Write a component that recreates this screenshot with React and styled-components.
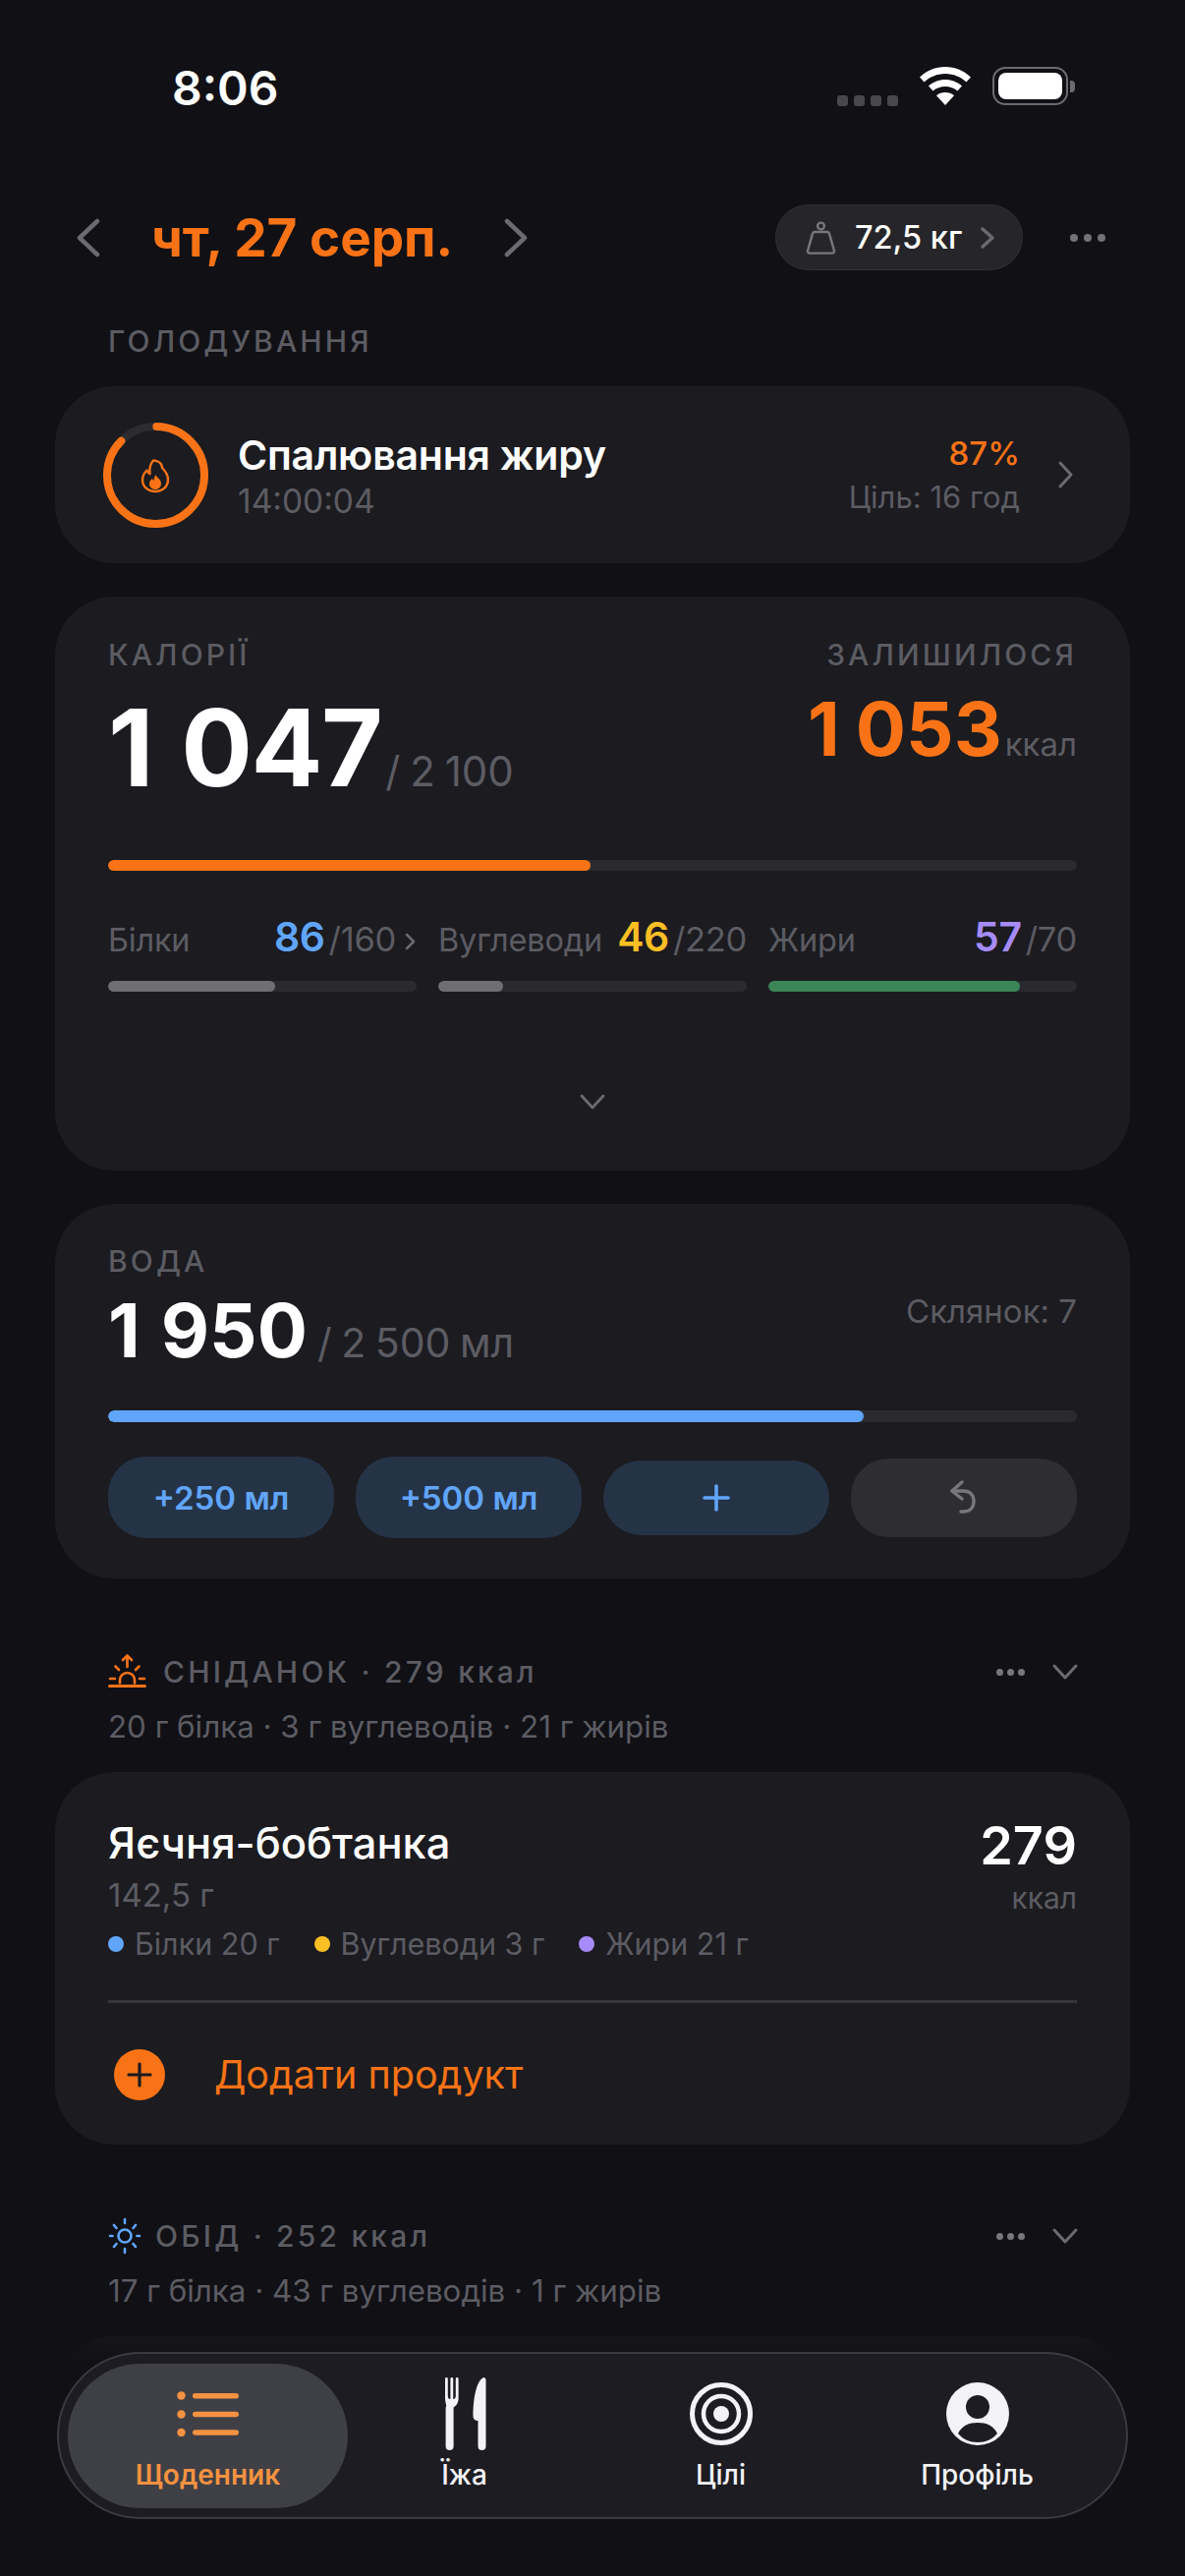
import React from "react";
import styled, { createGlobalStyle } from "styled-components";

const GlobalStyle = createGlobalStyle`
  html, body {
    margin: 0;
    height: 2621px;
    overflow: hidden;
    background: #101015;
    font-family: Inter, "Liberation Sans", sans-serif;
    -webkit-font-smoothing: antialiased;
  }
  * { box-sizing: border-box; }
`;

const ORANGE = "#f97316";
const BLUE = "#60a5fa";
const YELLOW = "#fbbf24";
const PURPLE = "#a78bfa";
const MUTED = "#5c5c62";

const Page = styled.div`
  width: 1206px;
  height: 2621px;
  padding: 0 56px;
  overflow: hidden;
  position: relative;
`;

/* status bar */
const StatusBar = styled.div`
  height: 208px;
  padding: 68px 119px 0 175px;
  margin: 0 -56px;
  display: flex;
  justify-content: space-between;
  align-items: flex-start;
`;
const Time = styled.span`
  font-size: 48px;
  line-height: 44px;
  font-weight: 600;
  color: #fff;
`;
const StatusIcons = styled.div`
  display: flex;
  align-items: flex-start;
`;
const SignalDots = styled.div`
  display: flex;
  gap: 6px;
  margin: 29px 21px 0 0;
`;
const SignalDot = styled.i`
  width: 11px;
  height: 11px;
  border-radius: 3px;
  background: #48484c;
`;
const BatteryBody = styled.div`
  width: 77px;
  height: 39px;
  margin-left: 21px;
  padding: 4px;
  border: 2px solid #6c6c70;
  border-radius: 13px;
  position: relative;
  &::after {
    content: "";
    position: absolute;
    right: -9px;
    top: 12px;
    width: 5px;
    height: 12px;
    border-radius: 0 4px 4px 0;
    background: #6c6c70;
  }
`;
const BatteryFill = styled.div`
  height: 100%;
  border-radius: 8px;
  background: #fff;
`;

/* date row */
const DateRow = styled.div`
  height: 67px;
  display: flex;
  align-items: center;
`;
const BackSpacer = styled.span`
  width: ${(p) => p.$width}px;
  flex: none;
`;
const DateText = styled.span`
  margin: 0 52px;
  font-size: 53px;
  font-weight: 700;
  color: ${ORANGE};
  white-space: nowrap;
`;
const WeightPill = styled.div`
  height: 67px;
  width: 252px;
  margin-left: auto;
  padding: 0 30px;
  display: flex;
  align-items: center;
  border-radius: 34px;
  background: #25252a;
  border: 1px solid #2f2f34;
  font-size: 32.5px;
  font-weight: 500;
  color: #fff;
  white-space: nowrap;
`;
const WeightText = styled.span`
  margin: 0 18px;
`;
const MoreDots = styled.div`
  display: flex;
  gap: ${(p) => p.$gap || 7}px;
  margin-left: ${(p) => p.$left || 0}px;
`;
const MoreDot = styled.i`
  width: ${(p) => p.$size || 8}px;
  height: ${(p) => p.$size || 8}px;
  border-radius: 50%;
  background: ${(p) => p.$color || "#727277"};
`;

/* shared */
const SectionLabel = styled.div`
  font-size: 30px;
  line-height: 36px;
  font-weight: 500;
  letter-spacing: 3.1px;
  color: ${MUTED};
  white-space: nowrap;
`;
const FastingLabel = styled(SectionLabel)`
  margin: 54px 0 28px 54px;
`;
const Card = styled.section`
  height: ${(p) => p.$height}px;
  margin-bottom: ${(p) => p.$gap || 34}px;
  padding: ${(p) => p.$pad || "0 54px"};
  border-radius: 60px;
  background: #1b1b20;
`;

/* fasting */
const FastingCard = styled(Card)`
  display: flex;
  align-items: center;
  padding: 0 57px 0 49px;
`;
const Ring = styled.div`
  width: 107px;
  height: 107px;
  margin-right: 30px;
  flex: none;
`;
const FastingInfo = styled.div`
  flex: 1;
`;
const FastingTitle = styled.div`
  font-size: 41px;
  line-height: 50px;
  font-weight: 600;
  letter-spacing: -0.2px;
  color: #fff;
`;
const FastingTime = styled.div`
  margin-top: 3px;
  font-size: 33.5px;
  line-height: 38px;
  color: ${MUTED};
`;
const FastingGoal = styled.div`
  text-align: right;
  margin-right: 38px;
`;
const FastingPct = styled.div`
  font-size: 33px;
  line-height: 38px;
  font-weight: 500;
  color: ${ORANGE};
`;
const FastingTarget = styled.div`
  margin-top: 8px;
  font-size: 31px;
  line-height: 36px;
  color: ${MUTED};
`;

/* calories */
const SplitRow = styled.div`
  height: ${(p) => p.$height || "auto"};
  display: flex;
  justify-content: space-between;
  align-items: flex-start;
`;
const BigLine = styled.div`
  display: flex;
  align-items: baseline;
  margin-top: ${(p) => p.$top || 0}px;
  white-space: nowrap;
`;
const BigNumber = styled.span`
  font-size: ${(p) => p.$size}px;
  line-height: 1;
  font-weight: 700;
  letter-spacing: ${(p) => p.$spacing || 0}px;
  word-spacing: ${(p) => p.$words || 0}px;
  color: ${(p) => p.$color || "#fff"};
`;
const Total = styled.span`
  margin-left: ${(p) => p.$left || 6}px;
  font-size: ${(p) => p.$size || 42}px;
  line-height: 1;
  font-weight: 400;
  word-spacing: -2px;
  color: ${MUTED};
`;
const GlassCount = styled.span`
  margin-top: 13px;
  font-size: 33px;
  line-height: 40px;
  color: ${MUTED};
`;
const Track = styled.div`
  height: ${(p) => p.$height || 11}px;
  margin-top: ${(p) => p.$top || 0}px;
  border-radius: 6px;
  background: #2a2a2f;
  overflow: hidden;
`;
const Fill = styled.div`
  height: 100%;
  border-radius: 6px;
  background: ${(p) => p.$color};
`;
const MacroGrid = styled.div`
  display: grid;
  grid-template-columns: repeat(3, 1fr);
  gap: 22px;
  margin-top: 42px;
`;
const MacroHead = styled.div`
  height: 44px;
  margin-bottom: 26px;
  display: flex;
  align-items: baseline;
  white-space: nowrap;
  font-size: 32.5px;
  color: ${MUTED};
`;
const MacroName = styled.span`
  flex: 1;
  letter-spacing: -0.2px;
`;
const MacroValue = styled.span`
  font-size: 41px;
  font-weight: 600;
  letter-spacing: -0.4px;
  color: ${(p) => p.$color};
`;
const MacroGoal = styled.span`
  margin-left: 4px;
  font-size: 34.5px;
  letter-spacing: -0.3px;
`;
const MacroArrow = styled.span`
  margin-left: 8px;
`;
const CenterChevron = styled.div`
  display: flex;
  justify-content: center;
  margin-top: 103px;
`;

/* water */
const WaterButtons = styled.div`
  display: grid;
  grid-template-columns: repeat(4, 1fr);
  gap: 22px;
  align-items: center;
  margin-top: 35px;
`;
const WaterButton = styled.div`
  height: ${(p) => p.$height}px;
  display: flex;
  align-items: center;
  justify-content: center;
  border-radius: 38px;
  background: ${(p) => (p.$plain ? "#2d2d32" : "#253346")};
  color: ${BLUE};
  font-size: 33px;
  font-weight: 600;
`;

/* meals */
const MealHead = styled.div`
  display: flex;
  align-items: center;
  height: 40px;
  margin: -1px 52px 1px 54px;
`;
const MealTitle = styled(SectionLabel)`
  flex: 1;
  margin-left: ${(p) => p.$left}px;
  letter-spacing: 3.2px;
`;
const MealSub = styled.div`
  margin: 18px 0 28px 54px;
  font-size: 31.3px;
  line-height: 36px;
  color: ${MUTED};
  white-space: nowrap;
`;
const FoodName = styled.div`
  font-size: 43.5px;
  line-height: 50px;
  font-weight: 500;
  color: #fff;
`;
const FoodCal = styled.div`
  font-size: 54px;
  line-height: 56px;
  font-weight: 600;
  color: #fff;
`;
const FoodUnit = styled.div`
  margin-top: 7px;
  text-align: right;
  font-size: 30px;
  line-height: 36px;
  color: ${MUTED};
`;
const FoodWeight = styled.div`
  margin-top: 9px;
  font-size: 33px;
  line-height: 38px;
  color: ${MUTED};
`;
const FoodMacros = styled.div`
  margin-top: 11px;
  display: flex;
  gap: 35px;
  font-size: 30.5px;
  line-height: 36px;
  color: ${MUTED};
  white-space: nowrap;
`;
const FoodMacro = styled.span`
  display: flex;
  align-items: center;
  gap: 11px;
  &::before {
    content: "";
    width: 16px;
    height: 16px;
    border-radius: 50%;
    background: ${(p) => p.$color};
  }
`;
const Divider = styled.div`
  height: 3px;
  margin-top: 39px;
  background: #35353a;
`;
const AddRow = styled.div`
  display: flex;
  align-items: center;
  gap: 50px;
  margin: 47px 0 0 6px;
  font-size: 39.5px;
  font-weight: 400;
  color: ${ORANGE};
`;
const AddIcon = styled.div`
  width: 52px;
  height: 52px;
  border-radius: 50%;
  background: ${ORANGE};
  display: flex;
  align-items: center;
  justify-content: center;
`;

/* bottom */
const BottomFade = styled.div`
  position: absolute;
  left: 0;
  right: 0;
  top: 2352px;
  bottom: 0;
  background: linear-gradient(to bottom, rgba(16, 16, 21, 0) 0, rgba(16, 16, 21, 0.85) 40px, #101015 60px);
`;
const TabBar = styled.nav`
  position: absolute;
  left: 58px;
  top: 2393px;
  width: 1090px;
  height: 170px;
  padding: 10px 19px 9px 21px;
  display: grid;
  grid-template-columns: repeat(4, 261px);
  border-radius: 85px;
  background: #1c1c22;
  border: 2px solid #3a3b42;
`;
const Tab = styled.div`
  display: flex;
  flex-direction: column;
  align-items: center;
  justify-content: flex-end;
  padding-bottom: 17px;
  margin: 0 ${(p) => (p.$active ? -12 : 0)}px;
  border-radius: 74px;
  background: ${(p) => (p.$active ? "#3f4046" : "transparent")};
  color: ${(p) => (p.$active ? "#f59241" : "#f2f2f7")};
  font-size: 28px;
  line-height: 34px;
  font-weight: ${(p) => (p.$active ? 600 : 500)};
  white-space: nowrap;
`;
const TabIcon = styled.div`
  height: 76px;
  margin-bottom: 7px;
  display: flex;
  align-items: center;
  justify-content: center;
`;

const Chevron = ({ dir = "right", w = 24, h = 40, color = "#6a6a70", sw = 4.5 }) => {
  const pts = {
    left: `${w - 3},3 3,${h / 2} ${w - 3},${h - 3}`,
    right: `3,3 ${w - 3},${h / 2} 3,${h - 3}`,
    down: `3,3 ${w / 2},${h - 3} ${w - 3},3`,
  }[dir];
  return (
    <svg width={w} height={h} viewBox={`0 0 ${w} ${h}`} style={{ flex: "none" }}>
      <polyline points={pts} fill="none" stroke={color} strokeWidth={sw} strokeLinecap="round" strokeLinejoin="round" />
    </svg>
  );
};

const Wifi = () => (
  <svg width="54" height="39" viewBox="0 0 54 39">
    <path d="M27 0C17 0 8 4 1 10.500L5.500 15.500C11 10.500 18.500 7 27 7s16 3.500 21.500 8.500L53 10.500C46 4 37 0 27 0Z" fill="#fff" />
    <path d="M27 13c-6.500 0-12.500 2.500-17 6.500l4.500 5C18 21.500 22.300 20 27 20s9 1.500 12.500 4.500l4.500-5C39.500 15.500 33.500 13 27 13Z" fill="#fff" />
    <path d="M27 26c-3.500 0-6.500 1.200-9 3.200L27 39l9-9.800C33.500 27.200 30.500 26 27 26Z" fill="#fff" />
  </svg>
);

const WeightIcon = () => (
  <svg width="32" height="34" viewBox="0 0 32 34" fill="none" stroke="#77777c" strokeWidth="2.4" strokeLinejoin="round" style={{ flex: "none" }}>
    <circle cx="15.500" cy="5" r="3.400" />
    <path d="M9 11h13a2 2 0 0 1 2 1.600l5 17.500a2 2 0 0 1-2 2.500H4a2 2 0 0 1-2-2.500l5-17.500A2 2 0 0 1 9 11Z" />
  </svg>
);

const RingIcon = () => {
  const r = 49.500;
  const c = 2 * Math.PI * r;
  return (
    <svg width="107" height="107" viewBox="0 0 107 107">
      <circle cx="53.500" cy="53.500" r={r} fill="none" stroke="#2b2b30" strokeWidth="8" />
      <circle
        cx="53.500"
        cy="53.500"
        r={r}
        fill="none"
        stroke={ORANGE}
        strokeWidth="8"
        strokeLinecap="round"
        strokeDasharray={`${c * 0.87} ${c}`}
        transform="rotate(-89 53.500 53.500)"
      />
      <g transform="translate(39 37)" fill="none" stroke={ORANGE} strokeWidth="2.400" strokeLinejoin="round">
        <path d="M12 1.500c5 .3 9 3 9 7.500 3.500 3.500 6 7.500 6 12 0 7-5.500 12-13 12S1 28 1 21.500C1 17 3 14 5.500 11.500c.5 1.800 1.500 3 3 3.700C7.800 10 9 5 12 1.500Z" />
        <path d="M14.500 16c.5 2.500 5.500 4.500 5.500 9 0 3.500-2.700 6-6 6s-6-2.500-6-6c0-2.300 1.500-3.800 3-5 .3 1 .8 1.600 1.500 2 .2-2.500.8-4.300 2-6Z" fill={ORANGE} stroke="none" />
      </g>
    </svg>
  );
};

const UndoIcon = () => (
  <svg width="32" height="36" viewBox="0 0 32 36" fill="none" stroke="#77777c" strokeWidth="3.400" strokeLinecap="round" strokeLinejoin="round">
    <path d="M14 2 4 11l10 8" />
    <path d="M4 11h11c7 0 11 4 11 10.500S22 32 16 32h-3" />
  </svg>
);

const SunriseIcon = () => (
  <svg width="40" height="36" viewBox="0 0 40 36" fill="none" stroke={ORANGE} strokeWidth="2.600" strokeLinecap="round" style={{ flex: "none" }}>
    <path d="M19.500 13V2M15 6l4.500-4.500L24 6" />
    <path d="M7.500 12.500l3.500 3.500M31.500 12.500L28 16M2 25h5M32 25h5" />
    <path d="M12 29.500v-3a7.500 7.500 0 0 1 15 0v3" />
    <path d="M1.500 32.500h36" strokeWidth="3" />
  </svg>
);

const SunIcon = () => (
  <svg width="34" height="38" viewBox="0 0 34 38" fill="none" stroke={BLUE} strokeWidth="2.600" strokeLinecap="round" style={{ flex: "none" }}>
    <circle cx="17" cy="19" r="6.500" />
    <path d="M17 2v4M17 32v4M2 19h2.500M29.500 19H32M6 8l2.500 3M28 8l-2.500 3M6 30l2.500-3M28 30l-2.500-3" />
  </svg>
);

const ListIcon = () => (
  <svg width="64" height="46" viewBox="0 0 64 46" fill="#f59241">
    <circle cx="4.500" cy="4.500" r="4.200" />
    <circle cx="4.500" cy="23.500" r="4.200" />
    <circle cx="4.500" cy="42" r="4.200" />
    <rect x="16" y="2" width="47" height="5.400" rx="2.700" />
    <rect x="16" y="20.800" width="47" height="5.400" rx="2.700" />
    <rect x="16" y="39.300" width="47" height="5.400" rx="2.700" />
  </svg>
);

const ForkKnifeIcon = () => (
  <svg width="44" height="74" viewBox="0 0 44 74" fill="#f2f2f7">
    <path d="M2 1.500a1.400 1.400 0 0 1 2.800 0V19c0 2 1 3 2.600 3V1.500a1.400 1.400 0 0 1 2.800 0V22c1.600 0 2.600-1 2.600-3V1.500a1.400 1.400 0 0 1 2.800 0V21c0 5-2.400 8-5 9.500V70a4 4 0 0 1-8 0V30.500C4.200 29 2 26 2 21Z" />
    <path d="M41 0c1.500 0 2.500 1 2.500 2.500V70a4 4 0 0 1-8 0V44c-3 0-5-1.500-5-5C30.500 24 33 4 41 0Z" />
  </svg>
);

const TargetIcon = () => (
  <svg width="64" height="64" viewBox="0 0 64 64" fill="none" stroke="#f2f2f7">
    <circle cx="32" cy="32" r="29.500" strokeWidth="5" />
    <circle cx="32" cy="32" r="18" strokeWidth="4.500" />
    <circle cx="32" cy="32" r="8" fill="#f2f2f7" stroke="none" />
  </svg>
);

const PersonIcon = () => (
  <svg width="64" height="64" viewBox="0 0 64 64">
    <circle cx="32" cy="32" r="32" fill="#f2f2f7" />
    <circle cx="32" cy="25" r="12" fill="#1c1c22" />
    <path d="M12 52c4-8 11-11 20-11s16 3 20 11c-5 6-12 9-20 9s-15-3-20-9Z" fill="#1c1c22" />
  </svg>
);

const Dots = ({ ...props }) => (
  <MoreDots {...props}>
    <MoreDot $size={props.$size} $color={props.$color} />
    <MoreDot $size={props.$size} $color={props.$color} />
    <MoreDot $size={props.$size} $color={props.$color} />
  </MoreDots>
);

const macros = [
  { name: "Білки", value: 86, goal: "/160", color: BLUE, pct: 54, bar: "#6f6f73", arrow: true },
  { name: "Вуглеводи", value: 46, goal: "/220", color: YELLOW, pct: 21, bar: "#6f6f73" },
  { name: "Жири", value: 57, goal: "/70", color: PURPLE, pct: 81.500, bar: "#3b8559" },
];

export default function App() {
  return (
    <>
      <GlobalStyle />
      <Page>
        <StatusBar>
          <Time>8:06</Time>
          <StatusIcons>
            <SignalDots>
              <SignalDot />
              <SignalDot />
              <SignalDot />
              <SignalDot />
            </SignalDots>
            <Wifi />
            <BatteryBody>
              <BatteryFill />
            </BatteryBody>
          </StatusIcons>
        </StatusBar>

        <DateRow>
          <BackSpacer $width={22} />
          <Chevron dir="left" />
          <DateText>чт, 27 серп.</DateText>
          <Chevron dir="right" />
          <WeightPill>
            <WeightIcon />
            <WeightText>72,5 кг</WeightText>
            <Chevron dir="right" w={16} h={24} sw={3.500} />
          </WeightPill>
          <Dots $left={48} $gap={6} $size={8} />
          <BackSpacer $width={25} />
        </DateRow>

        <FastingLabel>ГОЛОДУВАННЯ</FastingLabel>
        <FastingCard $height={180}>
          <Ring>
            <RingIcon />
          </Ring>
          <FastingInfo>
            <FastingTitle>Спалювання жиру</FastingTitle>
            <FastingTime>14:00:04</FastingTime>
          </FastingInfo>
          <FastingGoal>
            <FastingPct>87%</FastingPct>
            <FastingTarget>Ціль: 16 год</FastingTarget>
          </FastingGoal>
          <Chevron dir="right" w={17} h={30} sw={3} />
        </FastingCard>

        <Card $height={584} $pad="41px 54px 0">
          <SplitRow>
            <SectionLabel>КАЛОРІЇ</SectionLabel>
            <SectionLabel>ЗАЛИШИЛОСЯ</SectionLabel>
          </SplitRow>
          <SplitRow $height="132px">
            <BigLine $top={23}>
              <BigNumber $size={108} $spacing={-1.500} $words={5}>1 047</BigNumber>
              <Total $left={4}>/ 2 100</Total>
            </BigLine>
            <BigLine $top={19}>
              <BigNumber $size={76} $color={ORANGE} $words={-2}>1 053</BigNumber>
              <Total $size={33} $left={3}>ккал</Total>
            </BigLine>
          </SplitRow>
          <Track $top={59}>
            <Fill $color={ORANGE} style={{ width: "49.800%" }} />
          </Track>
          <MacroGrid>
            {macros.map((m) => (
              <div key={m.name}>
                <MacroHead>
                  <MacroName>{m.name}</MacroName>
                  <MacroValue $color={m.color}>{m.value}</MacroValue>
                  <MacroGoal>{m.goal}</MacroGoal>
                  {m.arrow && (
                    <MacroArrow>
                      <Chevron dir="right" w={13} h={20} sw={2.500} />
                    </MacroArrow>
                  )}
                </MacroHead>
                <Track>
                  <Fill $color={m.bar} style={{ width: `${m.pct}%` }} />
                </Track>
              </div>
            ))}
          </MacroGrid>
          <CenterChevron>
            <Chevron dir="down" w={28} h={18} sw={2.800} />
          </CenterChevron>
        </Card>

        <Card $height={381} $gap={76} $pad="40px 54px 0">
          <SectionLabel>ВОДА</SectionLabel>
          <SplitRow $height="96px">
            <BigLine $top={14}>
              <BigNumber $size={76} $words={3}>1 950</BigNumber>
              <Total $left={10} $size={41}>/ 2 500 мл</Total>
            </BigLine>
            <GlassCount>Склянок: 7</GlassCount>
          </SplitRow>
          <Track $top={38} $height={12}>
            <Fill $color={BLUE} style={{ width: "78%" }} />
          </Track>
          <WaterButtons>
            <WaterButton $height={83}>+250 мл</WaterButton>
            <WaterButton $height={83}>+500 мл</WaterButton>
            <WaterButton $height={76}>
              <svg width="28" height="28" viewBox="0 0 28 28" stroke={BLUE} strokeWidth="3.600" strokeLinecap="round">
                <path d="M14 2v24M2 14h24" />
              </svg>
            </WaterButton>
            <WaterButton $height={80} $plain>
              <UndoIcon />
            </WaterButton>
          </WaterButtons>
        </Card>

        <MealHead>
          <SunriseIcon />
          <MealTitle $left={16}>СНІДАНОК · 279 ккал</MealTitle>
          <Dots $gap={4} $size={7} $color="#77777c" />
          <BackSpacer $width={27} />
          <Chevron dir="down" w={28} h={18} sw={3} />
        </MealHead>
        <MealSub>20 г білка · 3 г вуглеводів · 21 г жирів</MealSub>
        <Card $height={379} $gap={74} $pad="47px 54px 0">
          <SplitRow>
            <div>
              <FoodName>Яєчня-бобтанка</FoodName>
              <FoodWeight>142,5 г</FoodWeight>
            </div>
            <div>
              <FoodCal>279</FoodCal>
              <FoodUnit>ккал</FoodUnit>
            </div>
          </SplitRow>
          <FoodMacros>
            <FoodMacro $color={BLUE}>Білки 20 г</FoodMacro>
            <FoodMacro $color={YELLOW}>Вуглеводи 3 г</FoodMacro>
            <FoodMacro $color={PURPLE}>Жири 21 г</FoodMacro>
          </FoodMacros>
          <Divider />
          <AddRow>
            <AddIcon>
              <svg width="26" height="26" viewBox="0 0 26 26" stroke="#1b1b20" strokeWidth="3.200" strokeLinecap="round">
                <path d="M13 2v22M2 13h22" />
              </svg>
            </AddIcon>
            Додати продукт
          </AddRow>
        </Card>

        <MealHead>
          <SunIcon />
          <MealTitle $left={14}>ОБІД · 252 ккал</MealTitle>
          <Dots $gap={4} $size={7} $color="#77777c" />
          <BackSpacer $width={27} />
          <Chevron dir="down" w={28} h={18} sw={3} />
        </MealHead>
        <MealSub>17 г білка · 43 г вуглеводів · 1 г жирів</MealSub>
        <Card $height={379} />

        <BottomFade />
        <TabBar>
          <Tab $active>
            <TabIcon><ListIcon /></TabIcon>
            Щоденник
          </Tab>
          <Tab>
            <TabIcon><ForkKnifeIcon /></TabIcon>
            Їжа
          </Tab>
          <Tab>
            <TabIcon><TargetIcon /></TabIcon>
            Цілі
          </Tab>
          <Tab>
            <TabIcon><PersonIcon /></TabIcon>
            Профіль
          </Tab>
        </TabBar>
      </Page>
    </>
  );
}
